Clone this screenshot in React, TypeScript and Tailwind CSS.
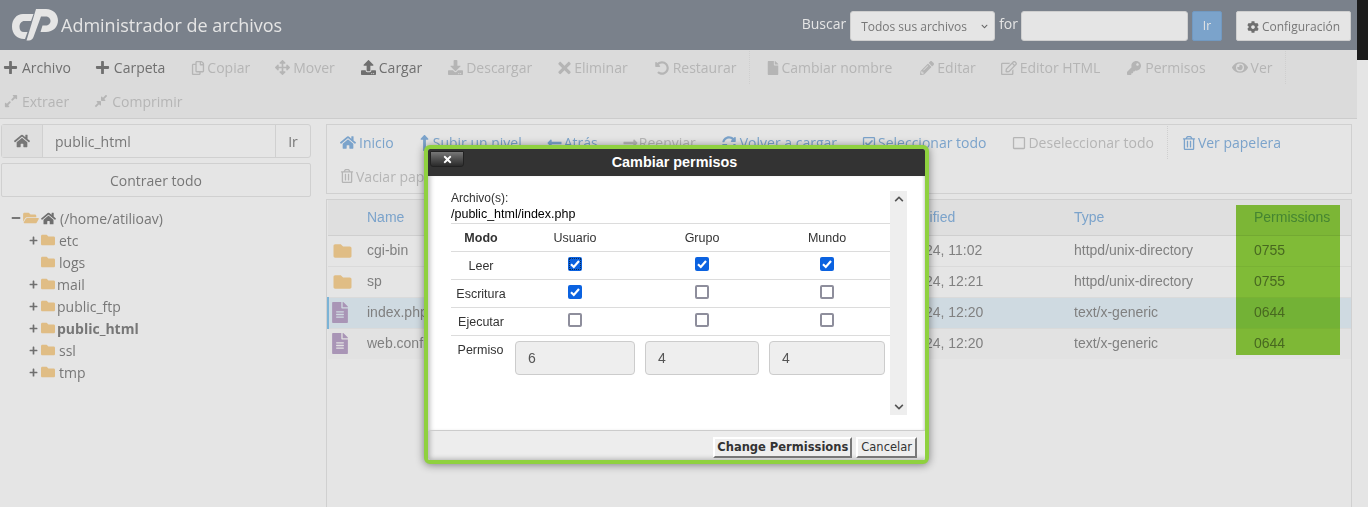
import React from 'react';
import {
  FaPlus, FaRegCopy, FaArrowsAlt, FaUpload, FaDownload, FaTimes, FaUndoAlt, FaFile, FaPencilAlt, FaRegEdit, FaKey, FaEye,
  FaExpandAlt, FaCompressAlt, FaHome, FaLongArrowAltUp, FaLongArrowAltLeft, FaLongArrowAltRight, FaSyncAlt, FaRegCheckSquare,
  FaRegSquare, FaRegTrashAlt, FaCog, FaFolder, FaFolderOpen, FaFileAlt, FaMinus, FaChevronUp, FaChevronDown,
} from 'react-icons/fa';

type Item = {
  label: string;
  Icon: React.ComponentType<{ className?: string }>;
  box: string;
  tone: string;
  mr: string;
  ic?: string;
  sep?: string;
};

const ON = 'text-[#6f6f6f]';
const OFF = 'text-[#b5b5b5]';
const LINK = 'text-[#7ba3cb]';

const toolRow1: Item[] = [
  { label: 'Archivo', Icon: FaPlus, box: 'w-[18px]', tone: ON, mr: 'mr-[25px]', ic: 'w-[15px] h-[15px] -ml-[1px]' },
  { label: 'Carpeta', Icon: FaPlus, box: 'w-[18px]', tone: ON, mr: 'mr-[26px]', ic: 'w-[15px] h-[15px] -ml-[1px]' },
  { label: 'Copiar', Icon: FaRegCopy, box: 'w-[16px]', tone: OFF, mr: 'mr-[25px]' },
  { label: 'Mover', Icon: FaArrowsAlt, box: 'w-[18px]', tone: OFF, mr: 'mr-[26px]', ic: 'w-[15px] h-[15px]' },
  { label: 'Cargar', Icon: FaUpload, box: 'w-[18px]', tone: ON, mr: 'mr-[26px]', ic: 'w-[15px] h-[15px]' },
  { label: 'Descargar', Icon: FaDownload, box: 'w-[18px]', tone: OFF, mr: 'mr-[26px]', ic: 'w-[15px] h-[15px]' },
  { label: 'Eliminar', Icon: FaTimes, box: 'w-[16px]', tone: OFF, mr: 'mr-[27px]', ic: 'w-[13px] h-[18px]' },
  { label: 'Restaurar', Icon: FaUndoAlt, box: 'w-[18px]', tone: OFF, mr: 'mr-[25px]', sep: 'mr-[16px]' },
  { label: 'Cambiar nombre', Icon: FaFile, box: 'w-[15px]', tone: OFF, mr: 'mr-[28px]' },
  { label: 'Editar', Icon: FaPencilAlt, box: 'w-[17px]', tone: OFF, mr: 'mr-[25px]' },
  { label: 'Editor HTML', Icon: FaRegEdit, box: 'w-[19px]', tone: OFF, mr: 'mr-[27px]', ic: 'w-[16px] h-[16px]' },
  { label: 'Permisos', Icon: FaKey, box: 'w-[18px]', tone: OFF, mr: 'mr-[26px]' },
  { label: 'Ver', Icon: FaEye, box: 'w-[19px]', tone: OFF, mr: 'mr-[24px]', sep: 'mr-[16px]', ic: 'w-[16px] h-[15px]' },
];
const toolRow2: Item[] = [
  { label: 'Extraer', Icon: FaExpandAlt, box: 'w-[18px]', tone: OFF, mr: 'mr-[25px]' },
  { label: 'Comprimir', Icon: FaCompressAlt, box: 'w-[18px]', tone: OFF, mr: 'mr-[26px]' },
];
const navRow1: Item[] = [
  { label: 'Inicio', Icon: FaHome, box: 'w-[19px]', tone: LINK, mr: 'mr-[26px]', ic: 'w-[16px] h-[15px]' },
  { label: 'Subir un nivel', Icon: FaLongArrowAltUp, box: 'w-[13px]', tone: LINK, mr: 'mr-[25px]', ic: 'w-[9px] h-[18px]' },
  { label: 'Atrás', Icon: FaLongArrowAltLeft, box: 'w-[17px]', tone: LINK, mr: 'mr-[25px]', ic: 'w-[15px] h-[16px]' },
  { label: 'Reenviar', Icon: FaLongArrowAltRight, box: 'w-[16px]', tone: OFF, mr: 'mr-[26px]', ic: 'w-[15px] h-[16px]' },
  { label: 'Volver a cargar', Icon: FaSyncAlt, box: 'w-[18px]', tone: LINK, mr: 'mr-[25px]' },
  { label: 'Seleccionar todo', Icon: FaRegCheckSquare, box: 'w-[16px]', tone: LINK, mr: 'mr-[26px]' },
  { label: 'Deseleccionar todo', Icon: FaRegSquare, box: 'w-[16px]', tone: OFF, mr: 'mr-[25px]', sep: 'mr-[14px]' },
  { label: 'Ver papelera', Icon: FaRegTrashAlt, box: 'w-[16px]', tone: LINK, mr: 'mr-[26px]' },
];

function ToolItem({ item }: { item: Item }) {
  const { Icon } = item;
  return (
    <>
      <span className={`flex items-center whitespace-nowrap ${item.mr} ${item.tone}`}>
        <span className={`flex-none flex items-center ${item.box}`}>
          <Icon className={`flex-none ${item.ic ?? 'w-[14px] h-[14px]'}`} />
        </span>
        {item.label}
      </span>
      {item.sep && <span className={`self-stretch border-l border-dotted border-[#cfcfcf] -ml-[12px] ${item.sep}`} />}
    </>
  );
}

const tree = [
  { name: 'etc', plus: true, gap: 'ml-[4px]' },
  { name: 'logs', plus: false, gap: 'ml-[4px]' },
  { name: 'mail', plus: true, gap: 'ml-[2px]' },
  { name: 'public_ftp', plus: true, gap: 'ml-[2px]' },
  { name: 'public_html', plus: true, gap: 'ml-[2px] font-bold' },
  { name: 'ssl', plus: true, gap: 'ml-[4px]' },
  { name: 'tmp', plus: true, gap: 'ml-[4px]' },
];

const rows = [
  { name: 'cgi-bin', date: 'Jul 9, 2024, 11:02', type: 'httpd/unix-directory', perm: '0755', dir: true, cls: 'bg-[#e5e5e5]' },
  { name: 'sp', date: 'Jul 9, 2024, 12:21', type: 'httpd/unix-directory', perm: '0755', dir: true, cls: 'bg-[#e5e5e5]' },
  { name: 'index.php', date: 'Jul 9, 2024, 12:20', type: 'text/x-generic', perm: '0644', dir: false, cls: 'bg-[#cfdae1]', active: true },
  { name: 'web.config', date: 'Jul 9, 2024, 12:20', type: 'text/x-generic', perm: '0644', dir: false, cls: 'bg-[#e2e2e2]' },
];

const checks = [
  { label: 'Leer', v: [true, true, true] },
  { label: 'Escritura', v: [true, false, false] },
  { label: 'Ejecutar', v: [false, false, false] },
];

function Check({ on, focus }: { on: boolean; focus?: boolean }) {
  return (
    <span
      role="checkbox"
      aria-checked={on}
      className={`w-[14px] h-[14px] rounded-[2px] flex items-center justify-center ${on ? 'bg-[#0b62e0]' : 'border-2 border-[#8e8e9c] bg-white'} ${focus ? 'outline-1 outline-dotted outline-[#0a2a55] -outline-offset-2' : ''}`}
    >
      {on && (
        <svg viewBox="0 0 14 14" className="w-[14px] h-[14px]" fill="none" stroke="white" strokeWidth="2.2">
          <path d="M3 7.3L5.8 10L11 4" />
        </svg>
      )}
    </span>
  );
}

function Logo() {
  return (
    <svg viewBox="0 0 46 32" className="w-[46px] h-[32px] flex-none" fill="#e5e5e5">
      <path d="M21.5 5H11C4.5 5 0 10.5 0 17.5C0 25 5 30 12 30H13L15.5 23H12C9 23 7.5 21 7.5 18C7.5 14.5 9.5 12 12.5 12H19Z" />
      <path d="M24 0H34C41 0 46 5 46 11.5C46 18 41 23 34 23H28.5L30.5 16.5H33.5C36.5 16.5 38.5 14.5 38.5 12C38.5 9.5 36.5 7.5 33.5 7.5H29L21.5 28C20.7 30 19 31.5 17 31.5H14.5Z" />
    </svg>
  );
}

export default function App() {
  return (
    <div className="relative h-[507px] w-[1368px] overflow-hidden bg-[#e5e5e5] text-[14px] text-[#777] font-['Open_Sans',sans-serif]">
      <div className="flex h-full">
        <div className="w-[1357px] flex-none flex flex-col">
          {/* Header */}
          <header className="h-[50px] flex-none bg-[#7a818b] flex items-center pl-[12px] pr-[6px]">
            <Logo />
            <h1 className="ml-[3px] mt-[1px] text-[18px] text-[#e5e5e5] whitespace-nowrap">Administrador de archivos</h1>
            <div className="ml-auto flex items-center h-[30px] mt-[2px]">
              <span className="text-[#e5e5e5] mr-[4px] -mt-[6px]">Buscar</span>
              <div className="w-[145px] h-[30px] bg-[#e5e5e5] border border-[#cfcfcf] rounded-[3px] flex items-center pl-[10px] pr-[6px] pt-[1px] text-[12px] text-[#777]">
                <span>Todos sus archivos</span>
                <FaChevronDown className="ml-auto w-[7px] h-[7px] text-[#666]" />
              </div>
              <span className="text-[#e5e5e5] ml-[4px] mr-[3px] -mt-[6px]">for</span>
              <div className="w-[167px] h-[30px] bg-[#e5e5e5] border border-[#cfcfcf] rounded-[3px]" />
              <div className="ml-[4px] w-[30px] h-[30px] bg-[#7ba3cb] border border-[#7199c1] rounded-[2px] flex items-center justify-center text-[12px] text-[#e5e5e5]">Ir</div>
              <div className="ml-[14px] w-[115px] h-[30px] bg-[#e5e5e5] border border-[#cfcfcf] rounded-[2px] flex items-center justify-center pt-[1px] text-[12px] text-[#777]">
                <FaCog className="w-[12px] h-[12px] mr-[3px] text-[#6f6f6f]" />Configuración
              </div>
            </div>
          </header>

          {/* Toolbar */}
          <div className="h-[69px] flex-none bg-[#dbdbdb] border-b border-[#cccccc] pl-[4px]">
            <div className="h-[34px] pt-[1px] flex items-center">
              {toolRow1.map((it) => <ToolItem key={it.label} item={it} />)}
            </div>
            <div className="h-[34px] flex items-center">
              {toolRow2.map((it) => <ToolItem key={it.label} item={it} />)}
            </div>
          </div>

          {/* Main */}
          <div className="flex-1 min-h-0 flex pt-[5px] pl-[1px] pr-[5px]">
            {/* Left */}
            <aside className="w-[310px] flex-none">
              <div className="flex h-[34px] border border-[#d0d0d0] rounded-[3px]">
                <div className="w-[41px] flex-none bg-[#dfdfdf] border-r border-[#d0d0d0] flex items-center justify-center">
                  <FaHome className="w-[16px] h-[16px] text-[#777]" />
                </div>
                <div className="flex-1 flex items-center pl-[12px]">public_html</div>
                <div className="w-[35px] flex-none border-l border-[#d0d0d0] flex items-center justify-center">Ir</div>
              </div>
              <div className="mt-[5px] h-[34px] border border-[#d0d0d0] rounded-[2px] flex items-center justify-center">Contraer todo</div>
              <div className="mt-[10px] pl-[10px]">
                <div className="h-[22px] flex items-center">
                  <FaMinus className="w-[10px] h-[10px] text-[#777]" />
                  <FaFolderOpen className="ml-[2px] w-[16px] h-[14px] text-[#e0bd85]" />
                  <FaHome className="ml-[2px] w-[15px] h-[15px] text-[#6f6f6f]" />
                  <span className="ml-[4px]">(/home/atilioav)</span>
                </div>
                {tree.map((t) => (
                  <div key={t.name} className="h-[22px] flex items-center pl-[18px]">
                    <span className="w-[12px] flex-none">{t.plus && <FaPlus className="w-[9px] h-[9px] text-[#6f6f6f]" />}</span>
                    <FaFolder className="w-[14px] h-[14px] text-[#e0bd85] flex-none" />
                    <span className={t.gap}>{t.name}</span>
                  </div>
                ))}
              </div>
            </aside>

            {/* Right */}
            <section className="ml-[15px] flex-1 min-w-0 flex flex-col">
              <div className="h-[70px] flex-none border border-[#d0d0d0] pl-[13px] pt-[1px]">
                <div className="h-[33px] flex items-center">
                  {navRow1.map((it) => <ToolItem key={it.label} item={it} />)}
                </div>
                <div className="h-[34px] flex items-center">
                  <ToolItem item={{ label: 'Vaciar papelera', Icon: FaRegTrashAlt, box: 'w-[16px]', tone: OFF, mr: 'mr-[26px]' }} />
                </div>
              </div>
              <div className="mt-[5px] flex-1 border border-b-0 border-[#d0d0d0] font-['Liberation_Sans',sans-serif]">
                <table className="w-full table-fixed border-collapse">
                  <colgroup>
                    <col className="w-[33px]" />
                    <col className="w-[505px]" />
                    <col className="w-[202px]" />
                    <col className="w-[180px]" />
                    <col />
                  </colgroup>
                  <thead>
                    <tr className="h-[35px] bg-[#dfdfdf] border-b border-[#cfcfcf] text-[#7ba3cb] text-left">
                      <th />
                      <th className="font-normal px-[6px]">Name</th>
                      <th className="font-normal px-[6px]">Last Modified</th>
                      <th className="font-normal px-[6px]">Type</th>
                      <th className="font-normal px-[6px]">Permissions</th>
                    </tr>
                  </thead>
                  <tbody className="text-[#808080]">
                    {rows.map((r) => (
                      <tr key={r.name} className={`h-[31px] border-b border-[#dadada] last:border-b-0 ${r.cls}`}>
                        <td className={r.active ? 'border-l-2 border-[#7bb3d6] pl-[3px]' : 'pl-[4px]'}>
                          {r.dir
                            ? <FaFolder className="w-[21px] h-[18px] text-[#e0bd85]" />
                            : <FaFileAlt className="w-[16px] h-[21px] text-[#a995b6]" />}
                        </td>
                        <td className="px-[6px]">{r.name}</td>
                        <td className="px-[6px]">{r.date}</td>
                        <td className="px-[6px]">{r.type}</td>
                        <td className="px-[6px]">{r.perm}</td>
                      </tr>
                    ))}
                  </tbody>
                </table>
              </div>
            </section>
          </div>
        </div>

        {/* Right strip */}
        <div className="w-[11px] flex-none">
          <div className="h-[60px] bg-[#1c1c1c]" />
        </div>
      </div>

      {/* Green highlight over the Permissions column */}
      <div className="absolute left-[1236px] top-[205px] w-[104px] h-[150px] bg-[#8ed03d] mix-blend-multiply" />

      {/* Modal */}
      <div className="absolute left-[424px] top-[145px] w-[505px] h-[319px] border-[4px] border-[#8fd13f] rounded-[6px] bg-white shadow-[0_1px_8px_rgba(0,0,0,0.45)] flex flex-col overflow-hidden font-['Liberation_Sans',sans-serif] text-[12.5px] text-[#333]">
        <div className="relative h-[27px] flex-none bg-[#333333] flex items-center justify-center pr-[4px] text-[14.4px] font-bold text-white">
          <span>Cambiar permisos</span>
          <span className="absolute left-[2px] top-[2px] w-[34px] h-[16px] rounded-b-[3px] rounded-t-[1px] bg-gradient-to-b from-[#777] to-[#2b2b2b] border border-[#222] flex items-center justify-center">
            <FaTimes className="w-[9px] h-[11px] text-white" />
          </span>
        </div>
        <div className="flex-1 min-h-0 pt-[14px] pl-[23px] flex shadow-[inset_5px_0_5px_-3px_rgba(0,0,0,0.25),inset_-3px_0_3px_-2px_rgba(0,0,0,0.2)]">
          <div className="w-[439px] flex-none">
            <div className="leading-[16px] pb-[1px]">
              <div className="text-[12px]">Archivo(s):</div>
              <div className="text-black">/public_html/index.php</div>
            </div>
            <div className="grid grid-cols-[60px_128px_126px_124px] items-center text-center border-t border-[#dcdcdc]">
              <div className="h-[27px] flex items-center justify-center pt-[2px] font-bold">Modo</div>
              <div className="h-[27px] flex items-center justify-center pt-[2px]">Usuario</div>
              <div className="h-[27px] flex items-center justify-center pt-[2px]">Grupo</div>
              <div className="h-[27px] flex items-center justify-center pt-[2px]">Mundo</div>
            </div>
            {checks.map((c, row) => (
              <div key={c.label} className="grid grid-cols-[60px_128px_126px_124px] items-center text-center border-t border-[#dcdcdc] h-[28px]">
                <div className="pt-[2px]">{c.label}</div>
                {c.v.map((on, i) => (
                  <div key={i} className="flex justify-center -mt-[4px]">
                    <Check on={on} focus={row === 0 && i === 0} />
                  </div>
                ))}
              </div>
            ))}
            <div className="border-t border-[#dcdcdc] pt-[5px] flex">
              <div className="w-[64px] flex-none text-center pt-[1px] leading-[16px] pr-[5px]">Permiso</div>
              <div className="w-[120px] h-[34px] bg-[#eeeeee] border border-[#cccccc] rounded-[4px] flex items-center pl-[12px] text-[14px] text-[#555]">6</div>
              <div className="ml-[10px] w-[114px] h-[34px] bg-[#eeeeee] border border-[#cccccc] rounded-[4px] flex items-center pl-[12px] text-[14px] text-[#555]">4</div>
              <div className="ml-[10px] w-[116px] h-[34px] bg-[#eeeeee] border border-[#cccccc] rounded-[4px] flex items-center pl-[12px] text-[14px] text-[#555]">4</div>
            </div>
          </div>
          <div className="mt-[1px] w-[17px] h-[224px] flex-none bg-[#eeeeee] flex flex-col items-center justify-between py-[3px]">
            <FaChevronUp className="w-[10px] h-[10px] text-[#555]" />
            <FaChevronDown className="w-[10px] h-[10px] text-[#555]" />
          </div>
        </div>
        <div className="h-[30px] flex-none bg-[#ededed] border-t border-[#cccccc] flex items-start justify-end pt-[6px] pr-[8px] shadow-[inset_5px_-4px_5px_-3px_rgba(0,0,0,0.25)] font-['DejaVu_Sans',sans-serif] text-[11.5px]">
          <span className="h-[21px] flex items-center pt-[1px] px-[2px] bg-[#eeeeee] border-2 border-t-white border-l-white border-r-[#777] border-b-[#777] font-bold whitespace-nowrap">Change Permissions</span>
          <span className="ml-[4px] h-[21px] flex items-center pt-[1px] px-[3px] bg-[#eeeeee] border-2 border-t-white border-l-white border-r-[#777] border-b-[#777]">Cancelar</span>
        </div>
      </div>
    </div>
  );
}
